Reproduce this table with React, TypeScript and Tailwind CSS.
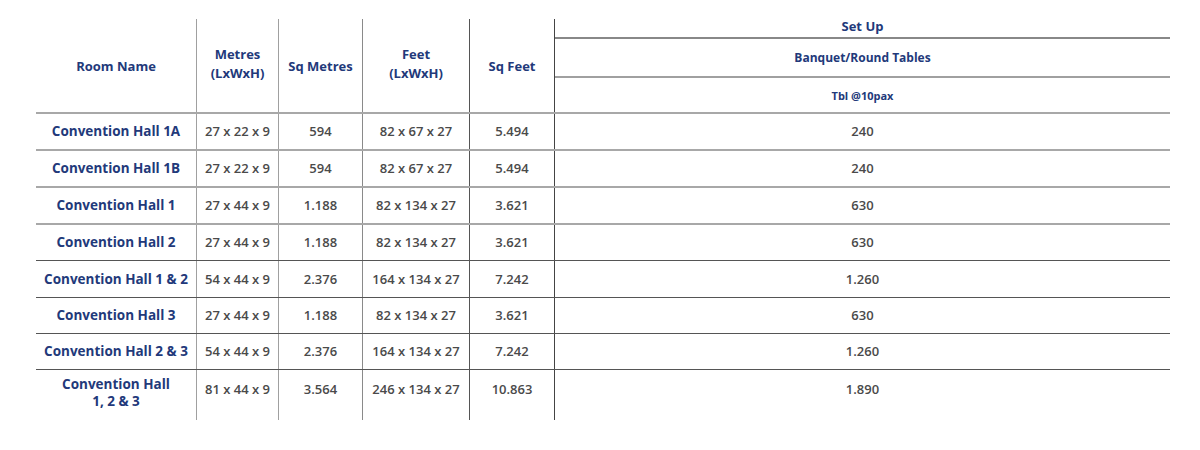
import React from "react";

const cols = "grid grid-cols-[161px_82px_84px_107px_85px_615px]";
const LIGHT = "border-[#a8a8a8]";

type Row = { name: React.ReactNode; m: string; sm: string; f: string; sf: string; t: string; h: string; dark: boolean; last?: boolean };

const rows: Row[] = [
  { name: "Convention Hall 1A", m: "27 x 22 x 9", sm: "594", f: "82 x 67 x 27", sf: "5.494", t: "240", h: "h-[37px]", dark: false },
  { name: "Convention Hall 1B", m: "27 x 22 x 9", sm: "594", f: "82 x 67 x 27", sf: "5.494", t: "240", h: "h-[37px]", dark: false },
  { name: "Convention Hall 1", m: "27 x 44 x 9", sm: "1.188", f: "82 x 134 x 27", sf: "3.621", t: "630", h: "h-[37px]", dark: false },
  { name: "Convention Hall 2", m: "27 x 44 x 9", sm: "1.188", f: "82 x 134 x 27", sf: "3.621", t: "630", h: "h-[36px]", dark: true },
  { name: "Convention Hall 1 & 2", m: "54 x 44 x 9", sm: "2.376", f: "164 x 134 x 27", sf: "7.242", t: "1.260", h: "h-[37px]", dark: true },
  { name: "Convention Hall 3", m: "27 x 44 x 9", sm: "1.188", f: "82 x 134 x 27", sf: "3.621", t: "630", h: "h-[36px]", dark: true },
  { name: "Convention Hall 2 & 3", m: "54 x 44 x 9", sm: "2.376", f: "164 x 134 x 27", sf: "7.242", t: "1.260", h: "h-[36px]", dark: true },
  { name: (<>Convention Hall<br />1, 2 &amp; 3</>), m: "81 x 44 x 9", sm: "3.564", f: "246 x 134 x 27", sf: "10.863", t: "1.890", h: "h-[50px]", dark: false, last: true },
];

const vLines = ["border-r border-[#a0a0a0]", "border-r border-[#a0a0a0]", "border-r border-[#8a8a8a]", "border-r border-[#555]", "border-r border-[#444]", ""];

export default function App() {
  return (
    <div className="w-[1200px] h-[450px] bg-white pt-[19px] pl-[36px] font-['Open_Sans',sans-serif]">
      <div className="w-[1134px]">
        {/* header */}
        <div className={`${cols} h-[95px] border-b-2 ${LIGHT} text-[#22397a] font-bold text-[13px] leading-[19px]`}>
          <div className={`flex items-center justify-center text-center pt-[2px] ${vLines[0]}`}>Room Name</div>
          <div className={`flex items-center justify-center text-center pb-[3px] ${vLines[1]}`}>Metres<br />(LxWxH)</div>
          <div className={`flex items-center justify-center text-center pt-[2px] ${vLines[2]}`}>Sq Metres</div>
          <div className={`flex items-center justify-center text-center pb-[3px] ${vLines[3]}`}>Feet<br />(LxWxH)</div>
          <div className={`flex items-center justify-center text-center pt-[2px] ${vLines[4]}`}>Sq Feet</div>
          <div className="flex flex-col">
            <div className="h-[20px] flex items-center justify-center border-b-2 border-[#888] text-[13px] pb-[3px]">Set Up</div>
            <div className="h-[39px] flex items-center justify-center border-b-2 border-[#a0a0a0] text-[12px]">Banquet/Round Tables</div>
            <div className="flex-1 flex items-center justify-center text-[11px]">Tbl @10pax</div>
          </div>
        </div>
        {rows.map((r, i) => (
          <div
            key={i}
            className={`${cols} ${r.h} ${r.last ? "" : r.dark ? "border-b border-[#555]" : "border-b-2 border-[#a8a8a8]"} text-[13px] leading-[17px]`}
          >
            <div className={`flex justify-center text-center font-bold text-[13.5px] text-[#22397a] ${vLines[0]} ${r.last ? "items-start pt-[6px]" : "items-center"}`}>{r.name}</div>
            {[r.m, r.sm, r.f, r.sf, r.t].map((v, j) => (
              <div key={j} className={`flex justify-center text-center font-semibold text-[#4a4a4a] ${vLines[j + 1]} ${r.last ? "items-start pt-[11px]" : "items-center"}`}>{v}</div>
            ))}
          </div>
        ))}
      </div>
    </div>
  );
}
